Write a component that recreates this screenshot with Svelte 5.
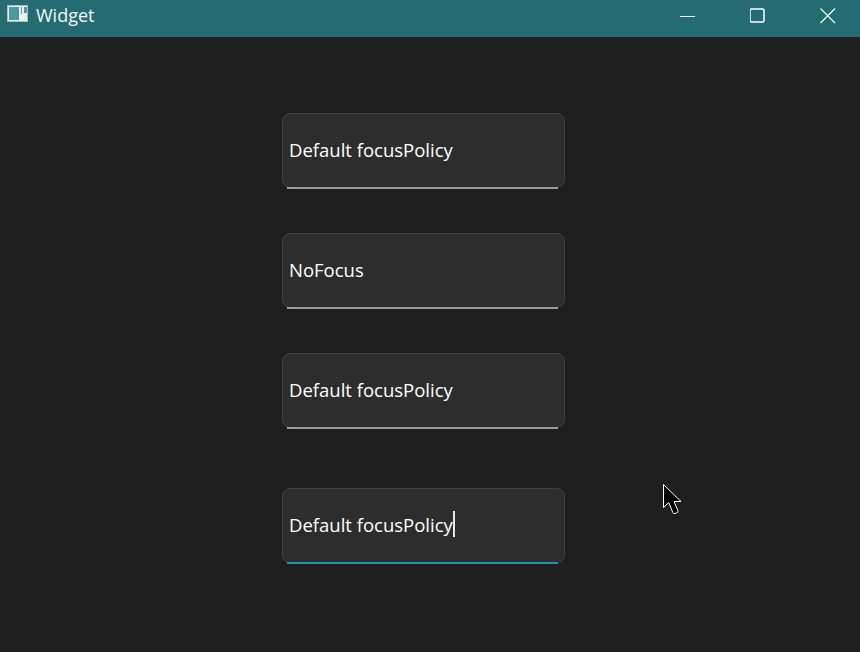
<script>
  const fields = [
    { label: 'Default focusPolicy' },
    { label: 'NoFocus' },
    { label: 'Default focusPolicy' },
    { label: 'Default focusPolicy', focused: true }
  ];
</script>

<div class="window">
  <header class="titlebar">
    <div class="title">
      <svg class="app-icon" width="21" height="17" viewBox="0 0 21 17">
        <rect x="0.5" y="0.5" width="20" height="16" fill="#e8eff0" stroke="#a9bfc2" />
        <rect x="2" y="2" width="10" height="13" fill="#4f9a9f" />
        <rect x="14" y="2" width="1" height="7" fill="#6f999d" />
        <rect x="17" y="2" width="3" height="6" fill="#5f8f94" />
      </svg>
      <span>Widget</span>
    </div>
    <div class="controls">
      <button aria-label="Minimize">
        <svg width="16" height="16" viewBox="0 0 16 16"><path d="M0 8.5h15" stroke="#fff" /></svg>
      </button>
      <button aria-label="Maximize">
        <svg width="16" height="16" viewBox="0 0 16 16"><rect x="0" y="1" width="14" height="13" rx="1.5" fill="none" stroke="#fff" stroke-width="1.5" /></svg>
      </button>
      <button aria-label="Close">
        <svg width="16" height="16" viewBox="0 0 16 16"><path d="M0.5 0.5l14.5 14.5M15 0.5L0.5 15" stroke="#fff" stroke-width="1.1" /></svg>
      </button>
    </div>
  </header>

  <main class="content">
    {#each fields as field}
      <div class="line-edit" class:focused={field.focused}>
        <span class="text">{field.label}</span>
        {#if field.focused}<span class="caret"></span>{/if}
      </div>
    {/each}
  </main>

  <svg class="pointer" width="20" height="32" viewBox="0 0 20 32">
    <path d="M0.5 0.5V23.5L5.8 18.5L9.8 28.5Q10.5 30 12 29.5L14 28.7Q15.5 28 14.8 26.5L11 17.5H18Z" fill="#000" stroke="#fff" />
  </svg>
</div>

<style>
  :global(body) {
    margin: 0;
    background: #1e1e1e;
  }

  .window {
    position: relative;
    width: 860px;
    height: 652px;
    overflow: hidden;
    background: #1e1e1e;
    font-family: "Open Sans", sans-serif;
    color: #fff;
  }

  .titlebar {
    display: flex;
    justify-content: space-between;
    align-items: center;
    height: 37px;
    background: #256b73;
  }

  .title {
    display: flex;
    align-items: center;
    gap: 8px;
    padding-left: 7px;
    margin-top: -9px;
    font-size: 18px;
    color: #f2f7f8;
  }

  .title span {
    margin-top: 2px;
  }

  .app-icon {
    display: block;
    margin-top: -2px;
  }

  .controls {
    display: flex;
    margin-right: -3px;
    margin-top: -6px;
  }

  .controls button {
    display: flex;
    align-items: center;
    justify-content: center;
    width: 70px;
    height: 30px;
    padding: 0;
    background: none;
    border: none;
  }

  .content {
    display: flex;
    flex-direction: column;
    gap: 45px;
    padding: 76px 0 0 282px;
  }

  .line-edit {
    position: relative;
    display: flex;
    align-items: center;
    box-sizing: border-box;
    width: 283px;
    height: 75px;
    padding-left: 6px;
    padding-bottom: 3px;
    background: #2d2d2d;
    border: 1px solid #404040;
    border-radius: 8px;
    font-size: 18.5px;
  }

  .line-edit:last-child {
    margin-top: 15px;
  }

  .line-edit::after {
    content: "";
    position: absolute;
    left: 4px;
    right: 6px;
    bottom: -2px;
    height: 2px;
    background: #9a9a9a;
  }

  .line-edit.focused::after {
    background: #1f97a6;
  }

  .text {
    white-space: nowrap;
  }

  .caret {
    width: 2px;
    height: 26px;
    background: #e6e6e6;
  }

  .pointer {
    position: absolute;
    left: 663px;
    top: 484px;
  }
</style>
